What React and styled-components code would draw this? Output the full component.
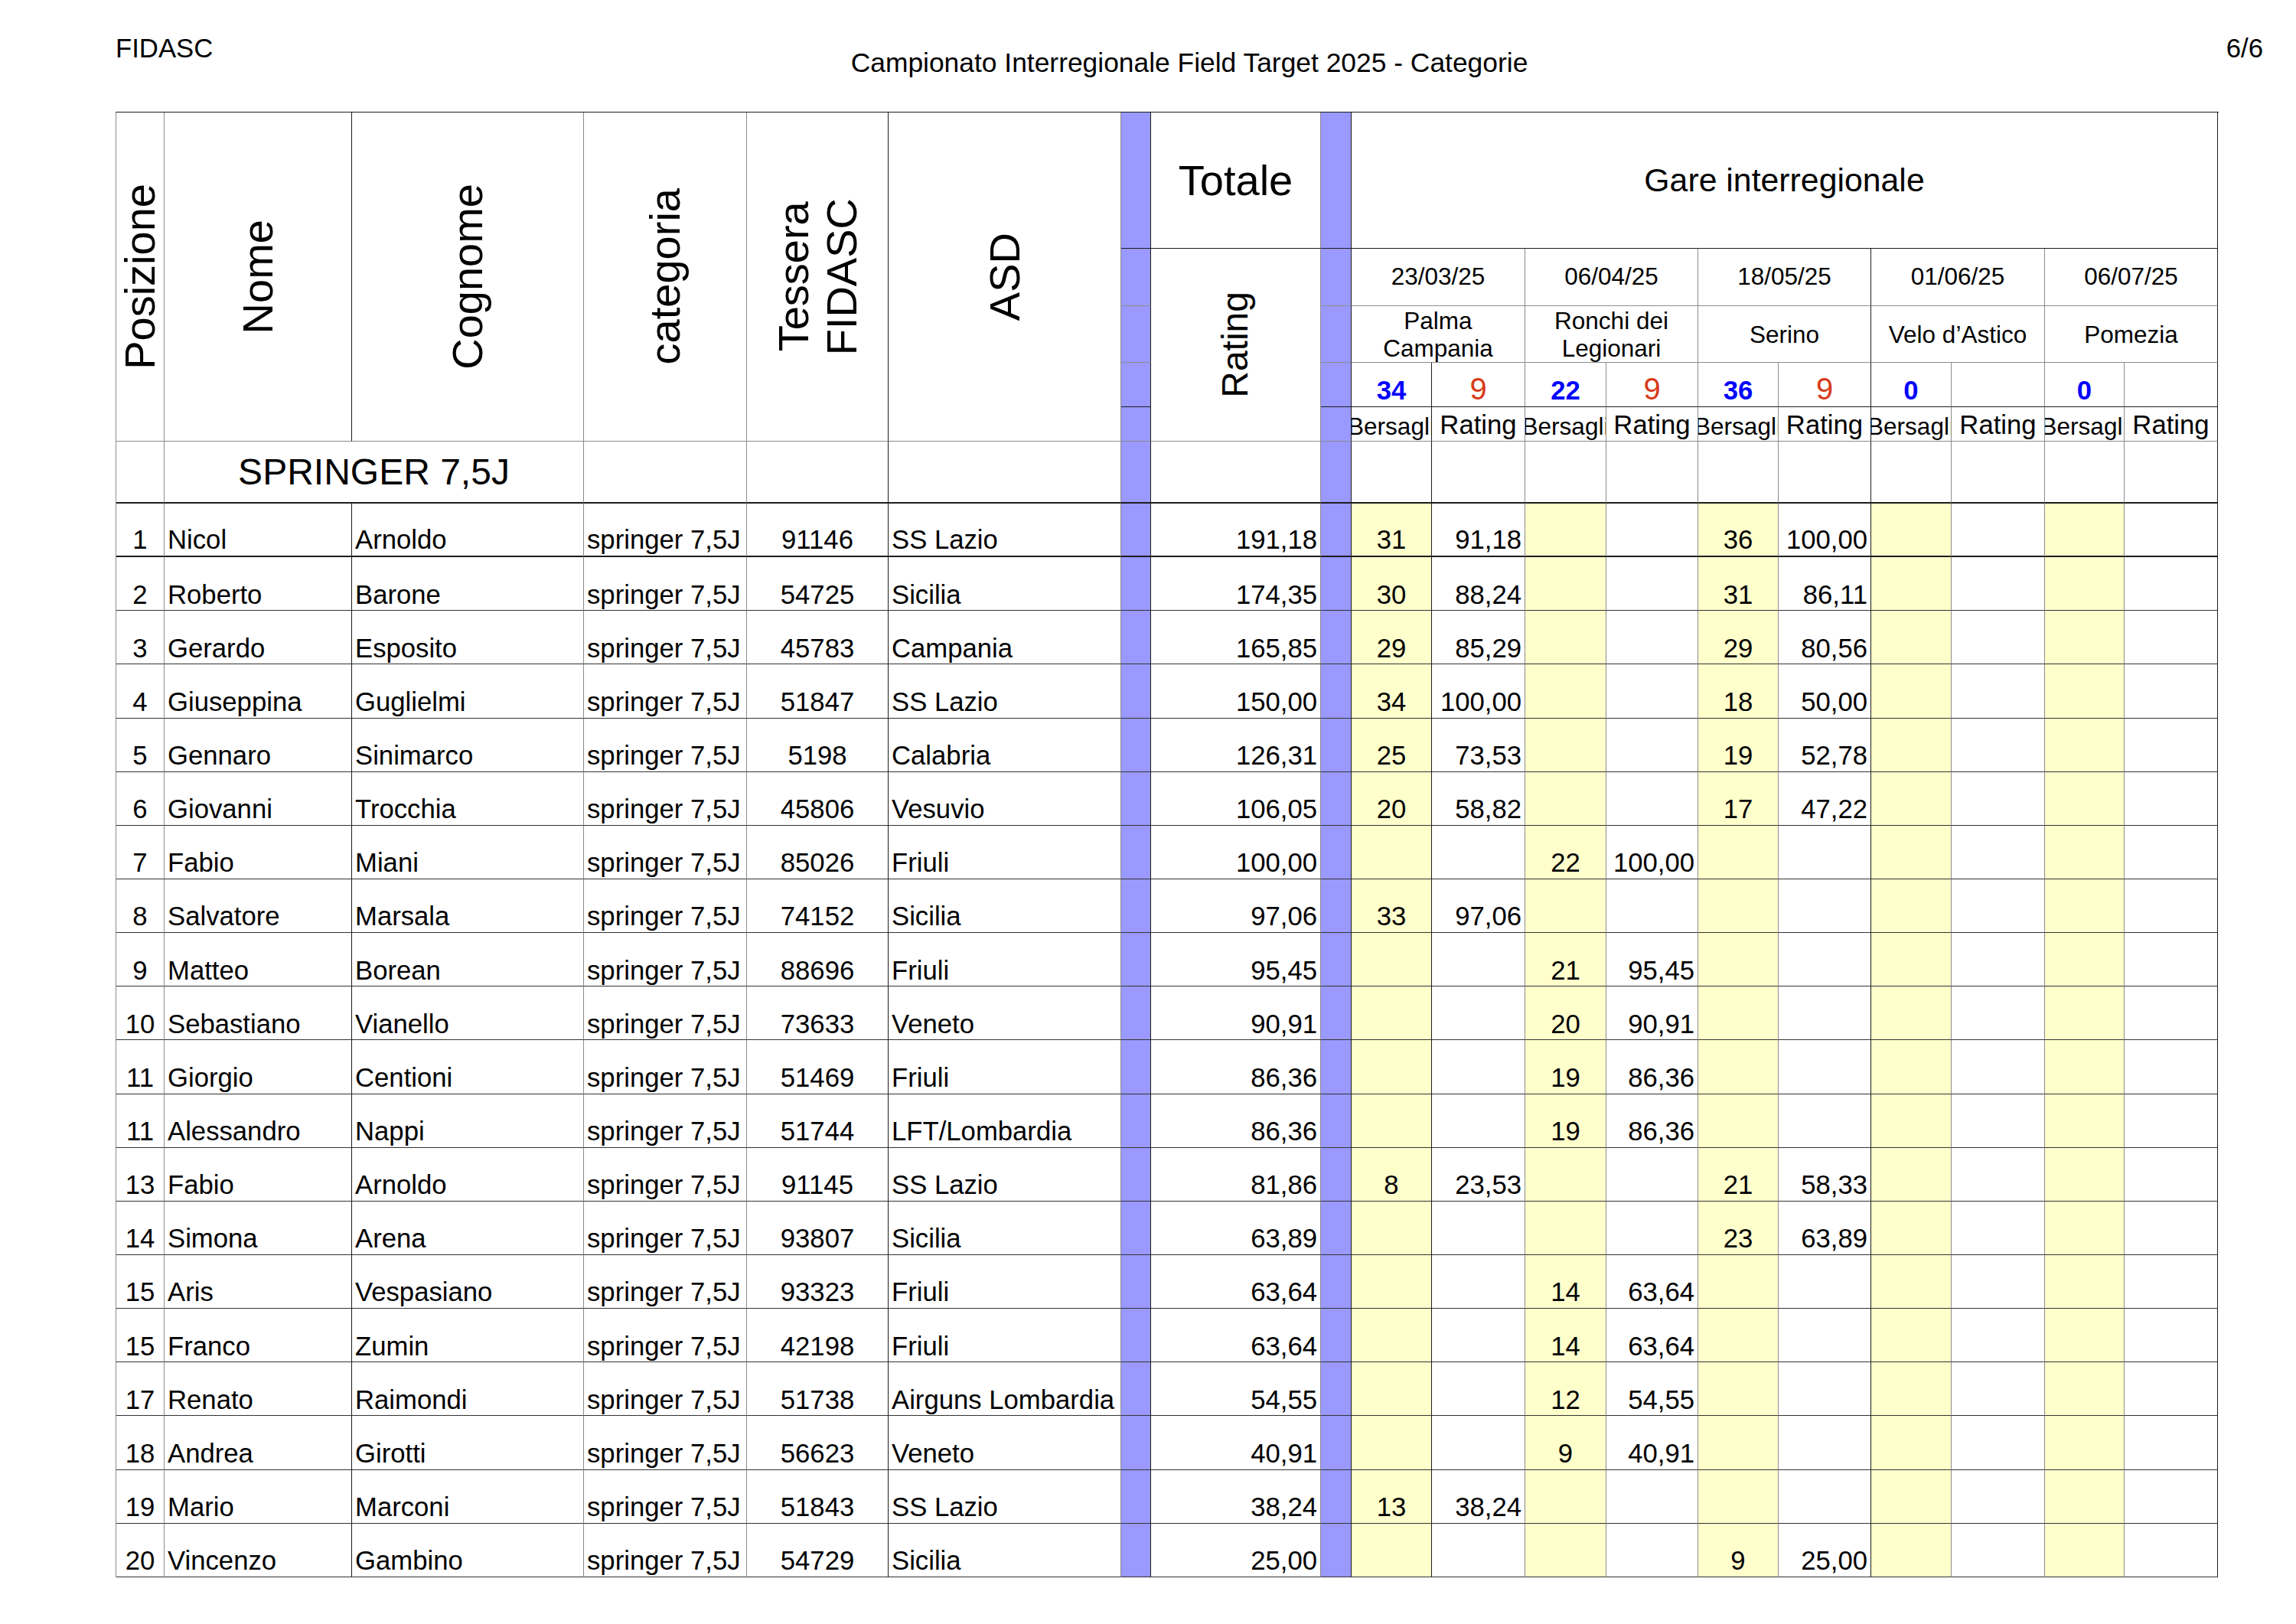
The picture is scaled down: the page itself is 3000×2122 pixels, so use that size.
import React from 'react'
import styled, { createGlobalStyle } from 'styled-components'

const DARK = '#1c1c1c'
const LIGHT = '#8c8c8c'
const BLUE = '#9999ff'
const YELLOW = '#ffffcc'

// column widths in px (each includes its right border)
const COLS = [63, 245, 303, 213, 185, 304, 39, 222, 40, 105, 122, 106, 120, 105, 121, 105, 122, 104, 122]
const colTemplate = COLS.map(w => `${w}px`).join(' ')

// colour of the right-hand rule of each column
const RIGHT = [LIGHT, DARK, LIGHT, LIGHT, DARK, LIGHT, DARK, LIGHT, DARK, DARK, LIGHT, LIGHT, LIGHT, LIGHT, DARK, LIGHT, LIGHT, LIGHT, DARK]
// colour of the bottom rule of each header row
const HEAD_BOTTOM = [DARK, LIGHT, LIGHT, DARK, LIGHT, DARK]

const RACES = [
  { date: '23/03/25', place: ['Palma', 'Campania'], bers: '34', rating: '9' },
  { date: '06/04/25', place: ['Ronchi dei', 'Legionari'], bers: '22', rating: '9' },
  { date: '18/05/25', place: ['Serino'], bers: '36', rating: '9' },
  { date: '01/06/25', place: ['Velo d’Astico'], bers: '0', rating: '' },
  { date: '06/07/25', place: ['Pomezia'], bers: '0', rating: '' },
]

const e = ['', '']
const PLAYERS = [
  ['1', 'Nicol', 'Arnoldo', '91146', 'SS Lazio', '191,18', [['31', '91,18'], e, ['36', '100,00'], e, e]],
  ['2', 'Roberto', 'Barone', '54725', 'Sicilia', '174,35', [['30', '88,24'], e, ['31', '86,11'], e, e]],
  ['3', 'Gerardo', 'Esposito', '45783', 'Campania', '165,85', [['29', '85,29'], e, ['29', '80,56'], e, e]],
  ['4', 'Giuseppina', 'Guglielmi', '51847', 'SS Lazio', '150,00', [['34', '100,00'], e, ['18', '50,00'], e, e]],
  ['5', 'Gennaro', 'Sinimarco', '5198', 'Calabria', '126,31', [['25', '73,53'], e, ['19', '52,78'], e, e]],
  ['6', 'Giovanni', 'Trocchia', '45806', 'Vesuvio', '106,05', [['20', '58,82'], e, ['17', '47,22'], e, e]],
  ['7', 'Fabio', 'Miani', '85026', 'Friuli', '100,00', [e, ['22', '100,00'], e, e, e]],
  ['8', 'Salvatore', 'Marsala', '74152', 'Sicilia', '97,06', [['33', '97,06'], e, e, e, e]],
  ['9', 'Matteo', 'Borean', '88696', 'Friuli', '95,45', [e, ['21', '95,45'], e, e, e]],
  ['10', 'Sebastiano', 'Vianello', '73633', 'Veneto', '90,91', [e, ['20', '90,91'], e, e, e]],
  ['11', 'Giorgio', 'Centioni', '51469', 'Friuli', '86,36', [e, ['19', '86,36'], e, e, e]],
  ['11', 'Alessandro', 'Nappi', '51744', 'LFT/Lombardia', '86,36', [e, ['19', '86,36'], e, e, e]],
  ['13', 'Fabio', 'Arnoldo', '91145', 'SS Lazio', '81,86', [['8', '23,53'], e, ['21', '58,33'], e, e]],
  ['14', 'Simona', 'Arena', '93807', 'Sicilia', '63,89', [e, e, ['23', '63,89'], e, e]],
  ['15', 'Aris', 'Vespasiano', '93323', 'Friuli', '63,64', [e, ['14', '63,64'], e, e, e]],
  ['15', 'Franco', 'Zumin', '42198', 'Friuli', '63,64', [e, ['14', '63,64'], e, e, e]],
  ['17', 'Renato', 'Raimondi', '51738', 'Airguns Lombardia', '54,55', [e, ['12', '54,55'], e, e, e]],
  ['18', 'Andrea', 'Girotti', '56623', 'Veneto', '40,91', [e, ['9', '40,91'], e, e, e]],
  ['19', 'Mario', 'Marconi', '51843', 'SS Lazio', '38,24', [['13', '38,24'], e, e, e, e]],
  ['20', 'Vincenzo', 'Gambino', '54729', 'Sicilia', '25,00', [e, e, ['9', '25,00'], e, e]],
]

const GlobalStyle = createGlobalStyle`
  html, body {
    margin: 0;
    padding: 0;
    background: #fff;
  }
  body {
    font-family: "Liberation Sans", Arial, sans-serif;
    color: #000;
  }
`

const Page = styled.div`
  width: 3000px;
  min-height: 2122px;
  box-sizing: border-box;
  padding-left: 151px;
`

const TopBar = styled.header`
  display: grid;
  grid-template-columns: 1fr auto 1fr;
  width: 2806px;
  height: 146px;
  font-size: 34.7px;
  line-height: 1;
`

const Corner = styled.div`
  padding-top: 46px;
  text-align: ${p => (p.$right ? 'right' : 'left')};
`

const Title = styled.div`
  padding-top: 65px;
  font-size: 35.4px;
  text-align: center;
`

const Table = styled.div`
  width: 2747px;
  border-top: 1px solid ${DARK};
  border-left: 1px solid ${LIGHT};
`

const Head = styled.div`
  display: grid;
  grid-template-columns: ${colTemplate};
  grid-template-rows: 178px 75px 74px 58px 45px 81px;
`

const Row = styled.div`
  display: grid;
  grid-template-columns: ${colTemplate};
  height: 70.15px;
`

const justify = { left: 'flex-start', center: 'center', right: 'flex-end' }

const Cell = styled.div`
  box-sizing: border-box;
  min-width: 0;
  grid-column: ${p => p.$col || 'auto'};
  grid-row: ${p => p.$row || 'auto'};
  display: flex;
  align-items: ${p => (p.$middle ? 'center' : 'flex-end')};
  justify-content: ${p => justify[p.$align || 'left']};
  padding: ${p => (p.$middle ? '0' : '0 4px 3px')};
  background: ${p => p.$bg || 'transparent'};
  border-right: 1px solid ${p => p.$br || DARK};
  border-bottom: ${p => p.$bw || 1}px solid ${p => p.$bb || DARK};
  overflow: hidden;
  white-space: nowrap;
  font-size: ${p => p.$size || 34.7}px;
  line-height: 1;
`

const Vertical = styled.span`
  writing-mode: vertical-rl;
  transform: rotate(180deg);
  font-size: ${p => p.$size || 56}px;
  line-height: 1.13;
  text-align: center;
  white-space: nowrap;
`

const Place = styled.span`
  font-size: 31.5px;
  line-height: 36px;
  text-align: center;
  white-space: normal;
`

const Score = styled.span`
  color: #0000ff;
  font-weight: bold;
  font-size: 34.7px;
`

const Rate = styled.span`
  color: #d83b1a;
  font-size: 40px;
`

const Label = styled.span`
  font-size: ${p => p.$size || 34.7}px;
`

const LEFT_HEADS = [
  { text: ['Posizione'] },
  { text: ['Nome'] },
  { text: ['Cognome'] },
  { text: ['categoria'] },
  { text: ['Tessera', 'FIDASC'] },
  { text: ['ASD'] },
]

const BlueStack = ({ col }) =>
  HEAD_BOTTOM.map((bb, r) => (
    <Cell
      key={`b${col}-${r}`}
      $col={col}
      $row={r + 1}
      $bg={BLUE}
      $br={RIGHT[col - 1]}
      $bb={bb}
      $bw={r === 5 ? 2 : 1}
    />
  ))

const TableHead = () => (
  <Head>
    {LEFT_HEADS.map((h, i) => (
      <Cell key={`h${i}`} $col={i + 1} $row="1 / 6" $middle $align="center" $br={RIGHT[i]} $bb={LIGHT}>
        <Vertical>
          {h.text.map((t, k) => (
            <React.Fragment key={k}>
              {k > 0 && <br />}
              {t}
            </React.Fragment>
          ))}
        </Vertical>
      </Cell>
    ))}

    <BlueStack col={7} />
    <Cell $col={8} $row={1} $middle $align="center" $br={RIGHT[7]} $size={56}>
      Totale
    </Cell>
    <Cell $col={8} $row="2 / 6" $middle $align="center" $br={RIGHT[7]} $bb={LIGHT}>
      <Vertical $size={48}>Rating</Vertical>
    </Cell>
    <BlueStack col={9} />

    <Cell $col="10 / 20" $row={1} $middle $align="center" $br={DARK} $size={42.8}>
      Gare interregionale
    </Cell>

    {RACES.map((r, i) => {
      const c = 10 + i * 2
      const br = RIGHT[c]
      return (
        <React.Fragment key={r.date}>
          <Cell $col={`${c} / span 2`} $row={2} $middle $align="center" $br={br} $bb={LIGHT} $size={31.5}>
            {r.date}
          </Cell>
          <Cell $col={`${c} / span 2`} $row={3} $middle $align="center" $br={br} $bb={LIGHT}>
            <Place>
              {r.place.map((p, k) => (
                <React.Fragment key={k}>
                  {k > 0 && <br />}
                  {p}
                </React.Fragment>
              ))}
            </Place>
          </Cell>
          <Cell $col={c} $row={4} $align="center" $br={RIGHT[c - 1]}>
            <Score>{r.bers}</Score>
          </Cell>
          <Cell $col={c + 1} $row={4} $align="center" $br={br}>
            <Rate>{r.rating}</Rate>
          </Cell>
          <Cell $col={c} $row={5} $align="center" $br={RIGHT[c - 1]} $bb={LIGHT}>
            <Label $size={31.5}>Bersagli</Label>
          </Cell>
          <Cell $col={c + 1} $row={5} $align="center" $br={br} $bb={LIGHT}>
            <Label>Rating</Label>
          </Cell>
        </React.Fragment>
      )
    })}

    {/* category row */}
    <Cell $col={1} $row={6} $br={RIGHT[0]} $bw={2} />
    <Cell $col="2 / 4" $row={6} $middle $align="center" $br={RIGHT[2]} $bw={2} $size={48}>
      SPRINGER 7,5J
    </Cell>
    {[4, 5, 6, 8].map(c => (
      <Cell key={`s${c}`} $col={c} $row={6} $br={RIGHT[c - 1]} $bw={2} />
    ))}
    {RIGHT.slice(9).map((br, k) => (
      <Cell key={`sr${k}`} $col={10 + k} $row={6} $br={br} $bw={2} />
    ))}
  </Head>
)

const PlayerRow = ({ data, first }) => {
  const [pos, nome, cognome, tessera, asd, totale, races] = data
  const bb = first ? DARK : '#333'
  const bw = first ? 2 : 1
  return (
    <Row>
      <Cell $align="center" $br={RIGHT[0]} $bb={bb} $bw={bw}>{pos}</Cell>
      <Cell $br={RIGHT[1]} $bb={bb} $bw={bw}>{nome}</Cell>
      <Cell $br={RIGHT[2]} $bb={bb} $bw={bw}>{cognome}</Cell>
      <Cell $br={RIGHT[3]} $bb={bb} $bw={bw}>springer 7,5J</Cell>
      <Cell $align="center" $br={RIGHT[4]} $bb={bb} $bw={bw}>{tessera}</Cell>
      <Cell $br={RIGHT[5]} $bb={bb} $bw={bw}>{asd}</Cell>
      <Cell $bg={BLUE} $br={RIGHT[6]} $bb={bb} $bw={bw} />
      <Cell $align="right" $br={RIGHT[7]} $bb={bb} $bw={bw}>{totale}</Cell>
      <Cell $bg={BLUE} $br={RIGHT[8]} $bb={bb} $bw={bw} />
      {races.map(([b, r], i) => (
        <React.Fragment key={i}>
          <Cell $align="center" $bg={YELLOW} $br={RIGHT[9 + i * 2]} $bb={bb} $bw={bw}>{b}</Cell>
          <Cell $align="right" $br={RIGHT[10 + i * 2]} $bb={bb} $bw={bw}>{r}</Cell>
        </React.Fragment>
      ))}
    </Row>
  )
}

export default function App() {
  return (
    <>
      <GlobalStyle />
      <Page>
        <TopBar>
          <Corner>FIDASC</Corner>
          <Title>Campionato Interregionale Field Target 2025 - Categorie</Title>
          <Corner $right>6/6</Corner>
        </TopBar>
        <Table>
          <TableHead />
          {PLAYERS.map((p, i) => (
            <PlayerRow key={i} data={p} first={i === 0} />
          ))}
        </Table>
      </Page>
    </>
  )
}
